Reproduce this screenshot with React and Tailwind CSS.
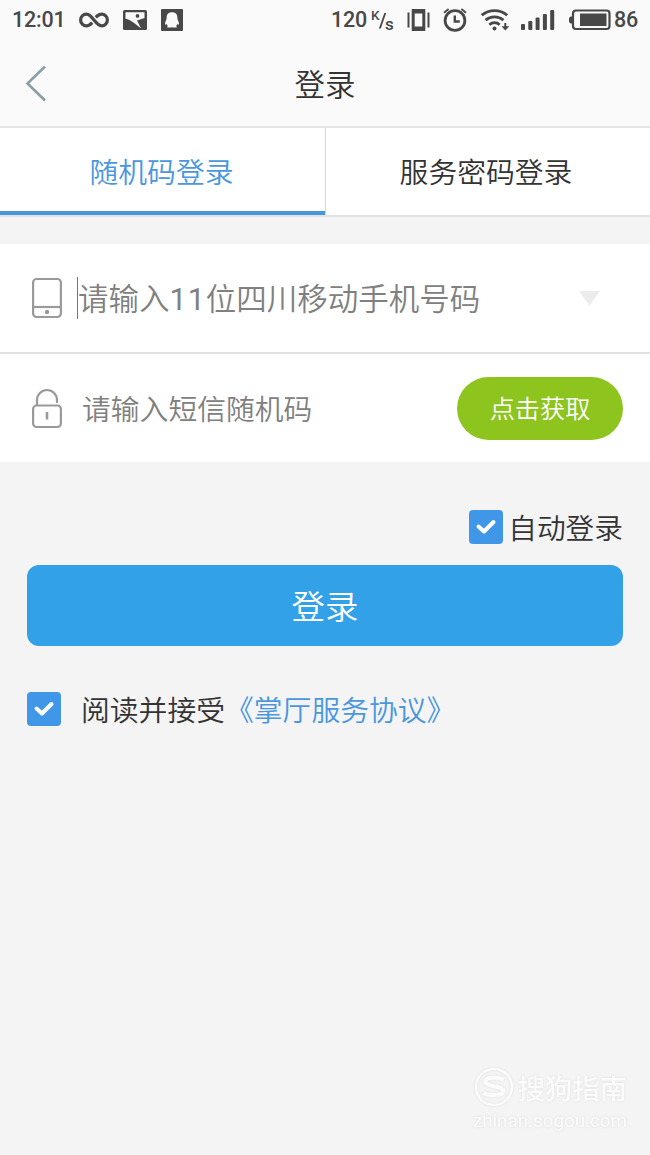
import { useState } from "react";

const StatusBar = () => {
  return (
    <div className="flex h-10 items-center justify-between pl-3 pr-3 font-['Roboto','Noto_Sans_CJK_SC',sans-serif] text-[21.500px] font-medium text-[#484848]">
      <div className="flex items-center">
        <span className="w-[53px] whitespace-nowrap tracking-[-0.200px]">12:01</span>
        <svg className="ml-3.5" width="30" height="16" viewBox="0 0 30 16" fill="none" stroke="currentColor" strokeWidth="3.200">
          <path d="M16.800 5.400C18.800 3.200 20.400 2.200 22.600 2.200a5.800 5.800 0 0 1 0 11.600c-6 0-9.200-11.600-15.200-11.600a5.800 5.800 0 0 0 0 11.600c2.200 0 3.800-1 5.800-3.200" />
        </svg>
        <svg className="ml-3.5" width="24" height="20" viewBox="0 0 24 20">
          <rect width="24" height="20" rx="1.500" fill="currentColor" />
          <path d="M2.500 2.300h19v5.700L14 10.600l4 7.600C13 15 9 10 2.500 8.800z" fill="#fafafa" />
          <circle cx="14.500" cy="5.900" r="1.900" fill="currentColor" />
        </svg>
        <svg className="ml-3.5" width="22" height="22" viewBox="0 0 22 22">
          <rect width="22" height="22" rx="1" fill="currentColor" />
          <path d="M11 3.300c-3.800 0-5.300 2.300-5.300 4.800 0 1.300-.2 2-.5 2.800-.8 1.600-1.400 3-1 4.800.5.300 1-.2 1.600-.8.200.9.600 1.500 1.200 2-.8.400-1 1-.6 1.500h4.100l.5-.4.5.4h4.100c.4-.5.200-1.100-.6-1.500.6-.5 1-1.100 1.200-2 .6.600 1.100 1.100 1.600.8.400-1.800-.2-3.200-1-4.800-.3-.8-.5-1.500-.5-2.800 0-2.500-1.500-4.800-5.300-4.800z" fill="#fafafa" />
        </svg>
      </div>
      <div className="flex items-center">
        <span className="w-9 tracking-[-0.200px]">120</span>
        <svg className="ml-1 overflow-visible" width="24" height="24" viewBox="0 0 24 24" fill="currentColor">
          <text x="0" y="11.500" fontSize="13.500">K</text>
          <text x="14" y="21.500" fontSize="17">s</text>
          <path d="M7.900 20.500 13.300 5h1.900L9.800 20.500z" />
        </svg>
        <svg className="ml-3" width="24" height="24" viewBox="0 0 24 24" fill="currentColor">
          <path d="M.5 4.500h2v15h-2zM20.500 4.500h2v15h-2z" />
          <path fillRule="evenodd" d="M4.700 1h13.600v22H4.700zM7.700 5.500v13h7.600v-13z" />
        </svg>
        <svg className="ml-[11px]" width="26" height="26" viewBox="0 0 26 26" fill="none" stroke="currentColor">
          <circle cx="13" cy="13.500" r="9.900" strokeWidth="2.800" />
          <path d="M12.800 8.500v6h5" strokeWidth="2.400" />
          <path d="M2 5.800 6.600 2M24 5.800 19.400 2" strokeWidth="1.800" />
        </svg>
        <svg className="ml-[13px]" width="28" height="24" viewBox="0 0 28 24" fill="none" stroke="currentColor" strokeWidth="2.800">
          <path d="M.8 7.200c7.200-6.200 18.200-6.200 25.400 0" />
          <path d="M4.600 12.100c5-4.400 12.800-4.400 17.800 0" />
          <path d="M8.300 16.700c3-2.700 7.400-2.700 10.400 0" />
          <circle cx="13.500" cy="20.500" r="2" fill="currentColor" stroke="none" />
          <path d="M24.300 15v4" strokeWidth="2" />
          <path d="M20.500 18.300h7.600l-3.800 4.200z" fill="currentColor" stroke="none" />
        </svg>
        <svg className="ml-3" width="34" height="22" viewBox="0 0 34 22" fill="currentColor">
          <rect x="0" y="15" width="4" height="6" rx="1" />
          <rect x="7.300" y="12" width="4" height="9" rx="1" />
          <rect x="14.600" y="8.500" width="4" height="12.500" rx="1" />
          <rect x="21.900" y="5" width="4" height="16" rx="1" />
          <rect x="29.200" y="1" width="4" height="20" rx="1" />
        </svg>
        <svg className="ml-3.5" width="42" height="22" viewBox="0 0 42 22" fill="currentColor">
          <rect x="4" y="1.500" width="36.500" height="18.500" rx="3" fill="none" stroke="currentColor" strokeWidth="2.200" />
          <rect x="11" y="4.500" width="26.500" height="12.500" />
          <path d="M3 7.500v7H1.500L0 13V9l1.500-1.500z" />
        </svg>
        <span className="ml-[3px] w-6 tracking-[-0.200px]">86</span>
      </div>
    </div>
  );
};

const CheckBox = ({ checked, onChange }) => {
  return (
    <button
      type="button"
      onClick={() => onChange(!checked)}
      className="grid size-[34px] place-items-center rounded-[4px] bg-[#4097e8]"
    >
      {checked && (
        <svg width="22" height="18" viewBox="0 0 22 18" fill="none" stroke="#fff" strokeWidth="4" strokeLinecap="round" strokeLinejoin="round">
          <path d="M3.500 8.500 9 13.500 18.500 4" />
        </svg>
      )}
    </button>
  );
};

const App = () => {
  const [tab, setTab] = useState("sms");
  const [autoLogin, setAutoLogin] = useState(true);
  const [agree, setAgree] = useState(true);

  return (
    <main className="flex h-[1155px] w-[650px] flex-col overflow-hidden bg-[#f4f4f4] font-['Noto_Sans_CJK_SC',sans-serif] font-[350] text-[#333]">
      <header className="h-32 border-b-2 border-[#e4e4e4] bg-[#fafafa]">
        <StatusBar />
        <div className="grid h-[86px] grid-cols-3 items-center">
          <svg className="ml-6" width="24" height="38" viewBox="0 0 24 38" fill="none" stroke="#8b9da6" strokeWidth="2.600">
            <path d="M21 2.500 3.500 19.500 21 36.500" />
          </svg>
          <h1 className="text-center text-[30.500px] leading-[44px]">登录</h1>
        </div>
      </header>

      <div className="grid h-[89px] grid-cols-2 border-b-2 border-[#e2e2e2] bg-white text-[28.800px]">
        <button
          onClick={() => setTab("sms")}
          className={`pr-0.5 pt-0.5 ${
            tab === "sms"
              ? "border-b-4 border-b-[#4a95dc] text-[#4a97de]"
              : "border-b-4 border-b-white"
          }`}
        >
          随机码登录
        </button>
        <div className="flex border-l border-[#d6d6d6]">
          <button
            onClick={() => setTab("password")}
            className={`grow pr-1 pt-0.5 ${
              tab === "password"
                ? "border-b-4 border-b-[#4a95dc] text-[#4a97de]"
                : "border-b-4 border-b-white"
            }`}
          >
            服务密码登录
          </button>
        </div>
      </div>

      <section className="mt-[27px] bg-white text-[#808080]">
        <div className="flex h-[110px] items-center border-b-2 border-[#e2e2e2] pl-8 pr-[50px]">
          <svg width="30" height="42" viewBox="0 0 30 42" fill="none" stroke="#9a9a9a" strokeWidth="2.200">
            <rect x="1.100" y="2" width="27.800" height="38" rx="3.500" />
            <path d="M1 30h28" />
            <circle cx="15" cy="35" r="2.200" fill="#9a9a9a" stroke="none" />
          </svg>
          <span className="ml-[15px] h-[42px] w-px bg-[#777]" />
          <span className="whitespace-nowrap text-[30.500px] leading-[44px]">
            请输入<span className="font-['Roboto'] font-normal tracking-[1px]">11</span>位四川移动手机号码
          </span>
          <svg className="ml-auto" width="21" height="15" viewBox="0 0 21 15">
            <path d="M0 0h21L10.500 15z" fill="#ececec" />
          </svg>
        </div>
        <div className="flex h-[108px] items-center pl-8 pr-[27px]">
          <svg width="30" height="42" viewBox="0 0 30 42" fill="none" stroke="#9a9a9a" strokeWidth="2.200">
            <rect x="1.100" y="18.500" width="27.800" height="21.500" rx="3.500" />
            <path d="M5 18.500V13a10 10 0 0 1 20 0v3" />
            <path d="M15 25v7.500" strokeWidth="2.600" />
          </svg>
          <span className="ml-5 text-[28.800px]">请输入短信随机码</span>
          <button className="ml-auto h-[63px] w-[166px] rounded-full bg-[#8dc41e] text-[25.200px] text-white">
            点击获取
          </button>
        </div>
      </section>

      <section className="px-[27px] pt-12 text-[28.700px]">
        <div className="flex h-[34px] items-center justify-end">
          <CheckBox checked={autoLogin} onChange={setAutoLogin} />
          <span className="ml-[5px]">自动登录</span>
        </div>
        <button className="mt-[21px] block h-[81px] w-full rounded-xl bg-[#32a1e8] text-[33.500px] text-white">
          登录
        </button>
        <div className="mt-[46px] flex h-[34px] items-center text-[28.800px]">
          <CheckBox checked={agree} onChange={setAgree} />
          <span className="ml-5">阅读并接受</span>
          <a className="text-[#4a97de]">《掌厅服务协议》</a>
        </div>
      </section>

      <footer className="mb-5 mr-[23px] mt-auto flex flex-col items-end font-normal text-[#fbfbfb]">
        <div className="flex items-center [filter:drop-shadow(0_0_1px_#ddd)]">
          <svg width="40" height="40" viewBox="0 0 40 40" fill="none" stroke="currentColor">
            <circle cx="20" cy="20" r="18" strokeWidth="2.400" />
            <path d="M30 12.500c-5-2.500-18.500-3-18.500 2 0 5.500 18 4 18 9.500 0 5-14 5-20 2" strokeWidth="4.200" />
          </svg>
          <span className="ml-1 text-[27.300px] font-medium leading-10">搜狗指南</span>
        </div>
        <span className="font-['Roboto'] text-[18.800px] leading-7 [filter:drop-shadow(0_0_1px_#ddd)]">zhinan.sogou.com</span>
      </footer>
    </main>
  );
};

export default App;
